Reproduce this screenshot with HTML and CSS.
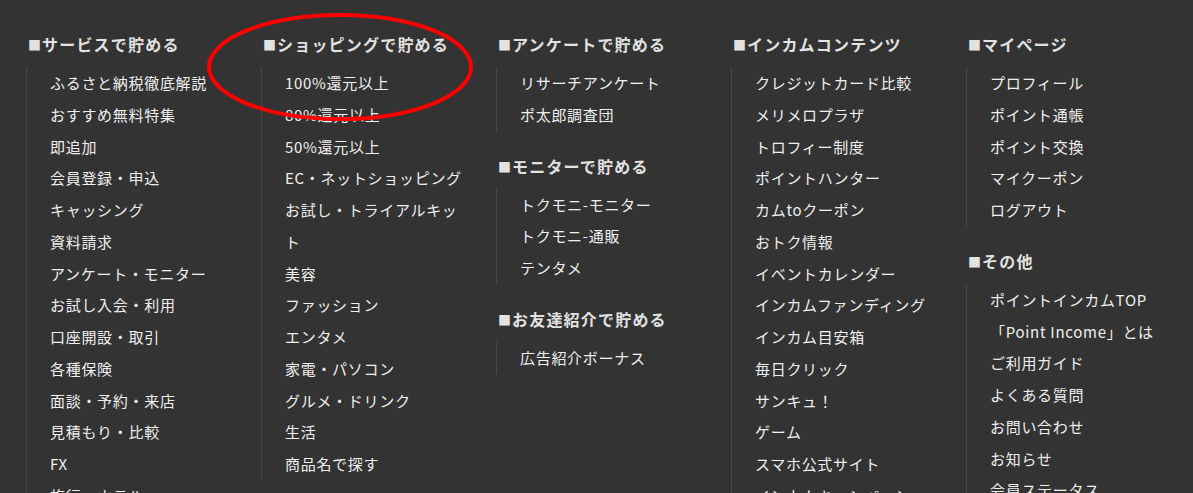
FILE: index.html
```html
<!DOCTYPE html>
<html lang="ja">
<head>
    <meta charset="UTF-8">
    <meta name="viewport" content="width=device-width, initial-scale=1.0">
    <title>サイトマップ - ポイントインカム</title>
    <link rel="stylesheet" href="styles.css">
</head>
<body>
    <div class="sitemap">
        <div class="col">
            <h3 class="group-title"><span class="mark">■</span>サービスで貯める</h3>
            <ul class="links">
                <li>ふるさと納税徹底解説</li>
                <li>おすすめ無料特集</li>
                <li>即追加</li>
                <li>会員登録・申込</li>
                <li>キャッシング</li>
                <li>資料請求</li>
                <li>アンケート・モニター</li>
                <li>お試し入会・利用</li>
                <li>口座開設・取引</li>
                <li>各種保険</li>
                <li>面談・予約・来店</li>
                <li>見積もり・比較</li>
                <li>FX</li>
                <li>旅行・ホテル</li>
            </ul>
        </div>

        <div class="col">
            <h3 class="group-title"><span class="mark">■</span>ショッピングで貯める</h3>
            <ul class="links">
                <li>100%還元以上</li>
                <li>80%還元以上</li>
                <li>50%還元以上</li>
                <li>EC・ネットショッピング</li>
                <li>お試し・トライアルキット</li>
                <li>美容</li>
                <li>ファッション</li>
                <li>エンタメ</li>
                <li>家電・パソコン</li>
                <li>グルメ・ドリンク</li>
                <li>生活</li>
                <li>商品名で探す</li>
            </ul>
        </div>

        <div class="col">
            <h3 class="group-title"><span class="mark">■</span>アンケートで貯める</h3>
            <ul class="links">
                <li>リサーチアンケート</li>
                <li>ポ太郎調査団</li>
            </ul>
            <h3 class="group-title"><span class="mark">■</span>モニターで貯める</h3>
            <ul class="links">
                <li>トクモニ-モニター</li>
                <li>トクモニ-通販</li>
                <li>テンタメ</li>
            </ul>
            <h3 class="group-title"><span class="mark">■</span>お友達紹介で貯める</h3>
            <ul class="links">
                <li>広告紹介ボーナス</li>
            </ul>
        </div>

        <div class="col">
            <h3 class="group-title"><span class="mark">■</span>インカムコンテンツ</h3>
            <ul class="links">
                <li>クレジットカード比較</li>
                <li>メリメロプラザ</li>
                <li>トロフィー制度</li>
                <li>ポイントハンター</li>
                <li>カムtoクーポン</li>
                <li>おトク情報</li>
                <li>イベントカレンダー</li>
                <li>インカムファンディング</li>
                <li>インカム目安箱</li>
                <li>毎日クリック</li>
                <li>サンキュ！</li>
                <li>ゲーム</li>
                <li>スマホ公式サイト</li>
                <li>インカムキャンペーン</li>
            </ul>
        </div>

        <div class="col">
            <h3 class="group-title"><span class="mark">■</span>マイページ</h3>
            <ul class="links">
                <li>プロフィール</li>
                <li>ポイント通帳</li>
                <li>ポイント交換</li>
                <li>マイクーポン</li>
                <li>ログアウト</li>
            </ul>
            <h3 class="group-title"><span class="mark">■</span>その他</h3>
            <ul class="links">
                <li>ポイントインカムTOP</li>
                <li>「Point Income」とは</li>
                <li>ご利用ガイド</li>
                <li>よくある質問</li>
                <li>お問い合わせ</li>
                <li>お知らせ</li>
                <li>会員ステータス</li>
            </ul>
        </div>
    </div>

    <!-- red marker drawn over the shopping heading -->
    <svg class="marker" width="280" height="120" viewBox="0 0 280 120">
        <ellipse cx="133" cy="55" rx="131" ry="52" fill="none" stroke="#ff0000" stroke-width="4"/>
    </svg>
</body>
</html>
```

FILE: styles.css
```css
body {
    margin: 0;
    background: #333333;
    font-family: "Noto Sans CJK JP", "Noto Sans", sans-serif;
    color: #efefef;
    overflow: hidden;
    position: relative;
    height: 493px;
}
.sitemap {
    display: flex;
    padding: 32px 0 0 26px;
}
.col {
    width: 235px;
    flex: none;
}
.group-title {
    margin: 0 0 10px;
    padding-left: 2px;
    font-size: 16px;
    line-height: 24px;
    font-weight: bold;
    letter-spacing: 1.2px;
    color: #e2e2e2;
}
.mark {
    font-size: 13px;
    vertical-align: 1px;
    margin-right: 1px;
    letter-spacing: 0;
}
.links {
    list-style: none;
    margin: 0;
    padding: 0 0 0 23px;
    border-left: 1px solid #484848;
    width: 185px;
}
.links + .group-title {
    margin-top: 23px;
}
.links li {
    font-size: 15px;
    line-height: 31.75px;
    letter-spacing: 0.7px;
}
.marker {
    position: absolute;
    left: 207px;
    top: 12px;
}
```
